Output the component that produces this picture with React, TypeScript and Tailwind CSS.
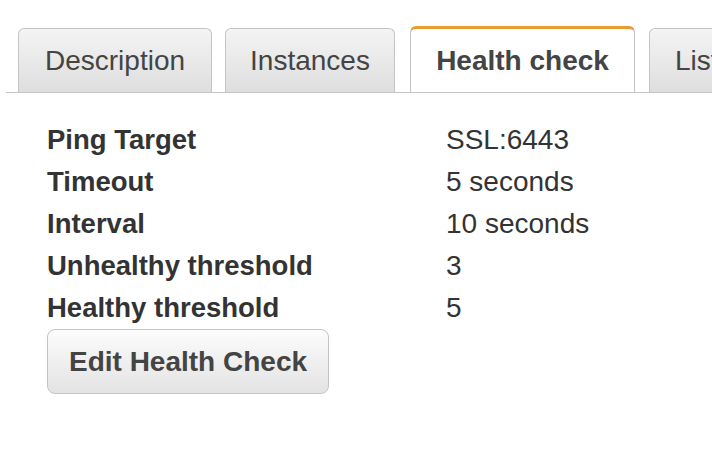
import React from "react";

const rows = [
  { label: "Ping Target", value: "SSL:6443" },
  { label: "Timeout", value: "5 seconds" },
  { label: "Interval", value: "10 seconds" },
  { label: "Unhealthy threshold", value: "3" },
  { label: "Healthy threshold", value: "5" },
];

const tabBase =
  "flex shrink-0 items-center justify-center rounded-t-[6px] border border-b-0 border-[#c4c4c4] text-[28px] text-[#444]";

export default function App() {
  return (
    <div
      className="w-[712px] h-[470px] overflow-hidden bg-white"
      style={{ fontFamily: '"Liberation Sans", Arial, sans-serif' }}
    >
      {/* tab strip */}
      <div className="ml-[6px] flex items-end gap-[13px] overflow-hidden border-b border-[#c6c6c6] pt-[26px] pl-[12px]">
        <div className={`${tabBase} h-[64px] w-[194px] bg-gradient-to-b from-[#f4f4f4] to-[#dedede]`}>
          Description
        </div>
        <div className={`${tabBase} h-[64px] w-[170px] bg-gradient-to-b from-[#f4f4f4] to-[#dedede]`}>
          Instances
        </div>
        <div
          className={`${tabBase} ml-[2px] -mb-px h-[67px] w-[225px] border-t-[3px] border-t-[#ec9a31] bg-white font-bold text-[#333]`}
        >
          Health check
        </div>
        <div className={`${tabBase} ml-[1px] h-[64px] w-[140px] justify-start pl-[25px] bg-gradient-to-b from-[#f4f4f4] to-[#dedede]`}>
          Listeners
        </div>
      </div>

      {/* details */}
      <div className="pl-[47px] pt-[26px]">
        <div className="grid grid-cols-[399px_1fr]">
          {rows.map((r) => (
            <React.Fragment key={r.label}>
              <div className="h-[42px] leading-[42px] text-[27.5px] font-bold text-[#333]">{r.label}</div>
              <div className="h-[42px] leading-[42px] text-[28px] text-[#333]">{r.value}</div>
            </React.Fragment>
          ))}
        </div>
        <button className="h-[65px] w-[282px] rounded-[8px] border border-[#c6c6c6] bg-gradient-to-b from-[#fcfcfc] to-[#e3e3e3] text-[28px] font-bold text-[#444]">
          Edit Health Check
        </button>
      </div>
    </div>
  );
}
